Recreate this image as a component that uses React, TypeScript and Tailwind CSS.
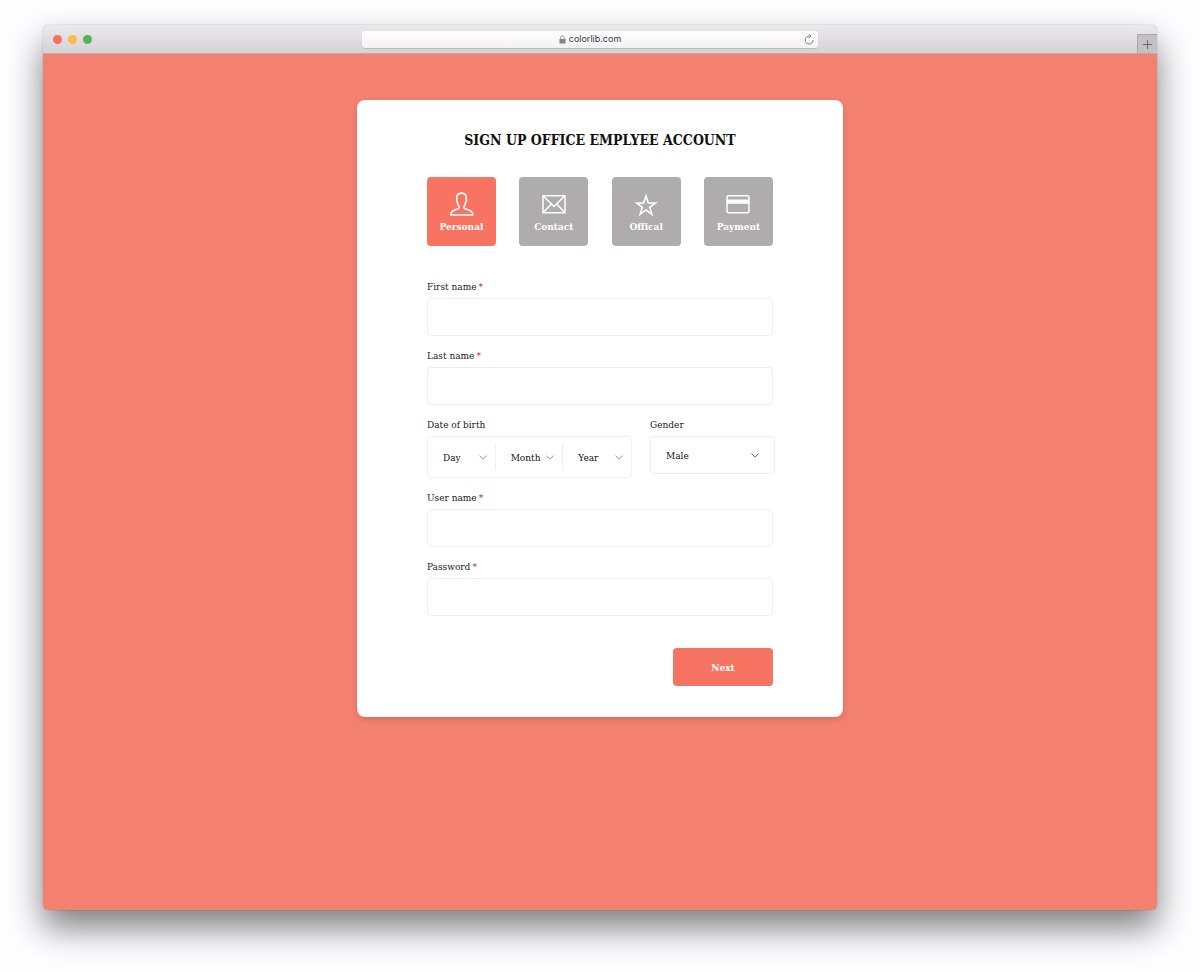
import type { ReactNode } from "react";
import { clsx } from "clsx";

type IconProps = { className?: string };

const PersonIcon = () => (
  <svg viewBox="0 0 24 24" className="size-6" fill="none" stroke="currentColor" strokeWidth="1.6" strokeLinejoin="round" aria-hidden="true">
    <path d="M9 14.200C8 13.200 7.500 11.700 7.300 9.900 6.500 9.600 6.400 8 6.800 7.300 6.200 3.500 8 1.100 11.500 1.100s5.300 2.400 4.700 6.200c.4.700.3 2.300-.5 2.600-.2 1.800-.7 3.300-1.700 4.300v1.800c.8 1 2.800 1.300 4.700 2 3 1 4 2.100 4.100 5H.700c.1-2.900 1.100-4 4.100-5 1.900-.7 3.400-1 4.200-2z" />
  </svg>
);

const MailIcon = () => (
  <svg viewBox="0 0 24 24" className="size-6" fill="none" stroke="currentColor" strokeWidth="1.5" aria-hidden="true">
    <path d="M1 3.700h22v17H1z" />
    <path d="M1.300 4 12 14.500 22.700 4M1.300 20.400l8-8.500M22.700 20.400l-8-8.500" />
  </svg>
);

const StarIcon = () => (
  <svg viewBox="0 0 24 24" className="size-6" fill="none" stroke="currentColor" strokeWidth="1.6" aria-hidden="true">
    <path d="m12 4 2.300 7h7.100l-5.700 4.300 2.200 7L12 18.100l-5.900 4.200 2.200-7L2.600 11h7.100z" />
  </svg>
);

const CardIcon = () => (
  <svg viewBox="0 0 24 24" className="size-6" fill="none" stroke="currentColor" strokeWidth="1.5" aria-hidden="true">
    <rect x="1" y="3.700" width="22" height="17" rx="1.500" />
    <path d="M1 7.500h22v4.200H1z" fill="currentColor" stroke="none" />
  </svg>
);

const Chevron = ({ className }: IconProps) => (
  <svg viewBox="0 0 8 5" className={clsx("pointer-events-none h-[5px] w-2", className)} fill="none" stroke="currentColor" strokeWidth="0.9" aria-hidden="true">
    <path d="M.4.500 4 4.200 7.600.500" />
  </svg>
);

const LockIcon = () => (
  <svg viewBox="0 0 8 10" className="h-[9px] w-[7px] text-[#858386]" aria-hidden="true">
    <rect x="0.500" y="4.300" width="7" height="5.200" rx="0.600" fill="currentColor" />
    <path d="M2 4.500V2.800a2 2 0 0 1 4 0v1.700" fill="none" stroke="currentColor" strokeWidth="0.900" />
  </svg>
);

const ReloadIcon = () => (
  <svg viewBox="0 0 10 11" className="h-[11px] w-2.5" fill="none" stroke="currentColor" strokeWidth="0.900" aria-hidden="true">
    <path d="M5.400 2.200A3.900 3.900 0 1 0 9 6" />
    <path d="M4.700.3 7 2.200 4.700 4.200" />
  </svg>
);

const steps = [
  { label: "Personal", icon: PersonIcon },
  { label: "Contact", icon: MailIcon },
  { label: "Offical", icon: StarIcon },
  { label: "Payment", icon: CardIcon }
];

const days = Array.from({ length: 31 }, (_, i) => String(i + 1));
const months = Array.from({ length: 12 }, (_, i) => String(i + 1));
const years = Array.from({ length: 60 }, (_, i) => String(2018 - i));

const labelClass = "mb-[3px] block text-[10px] leading-4 text-[#222]";

function TextField({ id, label, type = "text" }: { id: string; label: string; type?: string }) {
  return (
    <div>
      <label htmlFor={id} className={labelClass}>
        {label}
        <span className="ml-0.5 text-[#c0271d]">*</span>
      </label>
      <input
        id={id}
        type={type}
        required
        className="block h-[38px] w-full rounded-[4px] border border-[#efedf1] bg-white px-4 text-[11px] outline-none focus:border-[#f87462]"
      />
    </div>
  );
}

function DatePart({ name, options }: { name: string; options: string[] }) {
  return (
    <div className="grid items-center">
      <select
        aria-label={name}
        className="col-start-1 row-start-1 h-[26px] w-full appearance-none bg-transparent pl-[15px] text-[10px] text-[#111] outline-none"
      >
        <option>{name}</option>
        {options.map((option) => (
          <option key={option}>{option}</option>
        ))}
      </select>
      <Chevron className="col-start-1 row-start-1 mr-2 justify-self-end text-[#888]" />
    </div>
  );
}

function BrowserWindow({ children }: { children: ReactNode }) {
  return (
    <div className="overflow-hidden rounded-[5px] shadow-[0_18px_34px_rgba(0,0,0,0.5),0_0_1px_rgba(0,0,0,0.5)]">
      <header className="grid h-[29px] grid-cols-[319fr_456fr_339fr] items-center border-b border-[#b3aeb1] bg-linear-to-b from-[#ebe9ec] to-[#d5d2d5] font-['Inter',sans-serif]">
        <div className="flex gap-1.5 pl-2.5">
          <span className="size-[9px] rounded-full bg-[#f5705f]" />
          <span className="size-[9px] rounded-full bg-[#fbbb4f]" />
          <span className="size-[9px] rounded-full bg-[#57b254]" />
        </div>
        <div className="grid h-[17px] grid-cols-[1fr_auto_1fr] items-center rounded-[3px] bg-linear-to-b from-white to-[#f3f1f4] px-1 shadow-[0_1px_1px_rgba(0,0,0,0.15)]">
          <span className="col-start-2 flex items-center gap-[3px] text-[9px] leading-4 text-[#39373a]">
            <LockIcon />
            colorlib.com
          </span>
          <button type="button" aria-label="Reload" className="justify-self-end text-[#666]">
            <ReloadIcon />
          </button>
        </div>
        <button
          type="button"
          aria-label="New tab"
          className="flex h-[19px] w-5 items-center justify-center self-end justify-self-end border-t border-l border-[#aaa7aa] bg-[#c4c1c5] text-[#6b696c]"
        >
          <svg viewBox="0 0 9 9" className="size-[9px]" stroke="currentColor" strokeWidth="1" aria-hidden="true">
            <path d="M4.500 0v9M0 4.500h9" />
          </svg>
        </button>
      </header>
      {children}
    </div>
  );
}

export default function App() {
  return (
    <div className="min-h-screen bg-[#fefdff] px-[43px] pt-[25px] pb-[62px]">
      <BrowserWindow>
        <main className="bg-[#f4806f] px-4 pt-[46px] pb-[193px] font-['Roboto_Slab','DejaVu_Serif_Condensed','DejaVu_Serif',serif]">
          <form className="mx-auto max-w-[486px] rounded-[8px] bg-white px-[70px] pt-[29px] pb-[31px] shadow-[0_2px_6px_rgba(0,0,0,0.15)]">
            <h1 className="text-center text-[14px] leading-[22px] font-semibold whitespace-nowrap text-[#111]">
              SIGN UP OFFICE EMPLYEE ACCOUNT
            </h1>

            <nav aria-label="Steps" className="mt-[26px] flex justify-between">
              {steps.map(({ label, icon: Icon }, index) => (
                <button
                  key={label}
                  type="button"
                  aria-current={index === 0 ? "step" : undefined}
                  className={clsx(
                    "flex size-[69px] flex-col items-center rounded-[4px] pt-[15px] text-white",
                    index === 0 ? "bg-[#f87462]" : "bg-[#afacae]"
                  )}
                >
                  <Icon />
                  <span className="mt-[3px] text-[10px] leading-4 font-semibold">{label}</span>
                </button>
              ))}
            </nav>

            <div className="mt-[33px] space-y-3">
              <TextField id="first-name" label="First name" />
              <TextField id="last-name" label="Last name" />

              <div className="-mr-[2px] grid grid-cols-[205fr_125fr] items-start gap-[18px]">
                <div role="group" aria-labelledby="birth-label">
                  <span id="birth-label" className={labelClass}>Date of birth</span>
                  <div className="grid h-[42px] grid-cols-3 items-center divide-x divide-[#efedf1] rounded-[4px] border border-[#efedf1]">
                    <DatePart name="Day" options={days} />
                    <DatePart name="Month" options={months} />
                    <DatePart name="Year" options={years} />
                  </div>
                </div>
                <div>
                  <label htmlFor="gender" className={labelClass}>Gender</label>
                  <div className="grid items-center">
                    <select
                      id="gender"
                      className="col-start-1 row-start-1 h-[38px] w-full appearance-none rounded-[4px] border border-[#efedf1] bg-white pl-[15px] text-[10px] text-[#111] outline-none"
                    >
                      <option>Male</option>
                      <option>Female</option>
                    </select>
                    <Chevron className="col-start-1 row-start-1 mr-4 justify-self-end text-[#555]" />
                  </div>
                </div>
              </div>

              <TextField id="user-name" label="User name" />
              <TextField id="password" label="Password" type="password" />
            </div>

            <div className="mt-8 flex justify-end">
              <button type="submit" className="h-[38px] w-[100px] rounded-[4px] bg-[#f87462] text-[10px] font-bold text-white">
                Next
              </button>
            </div>
          </form>
        </main>
      </BrowserWindow>
    </div>
  );
}
